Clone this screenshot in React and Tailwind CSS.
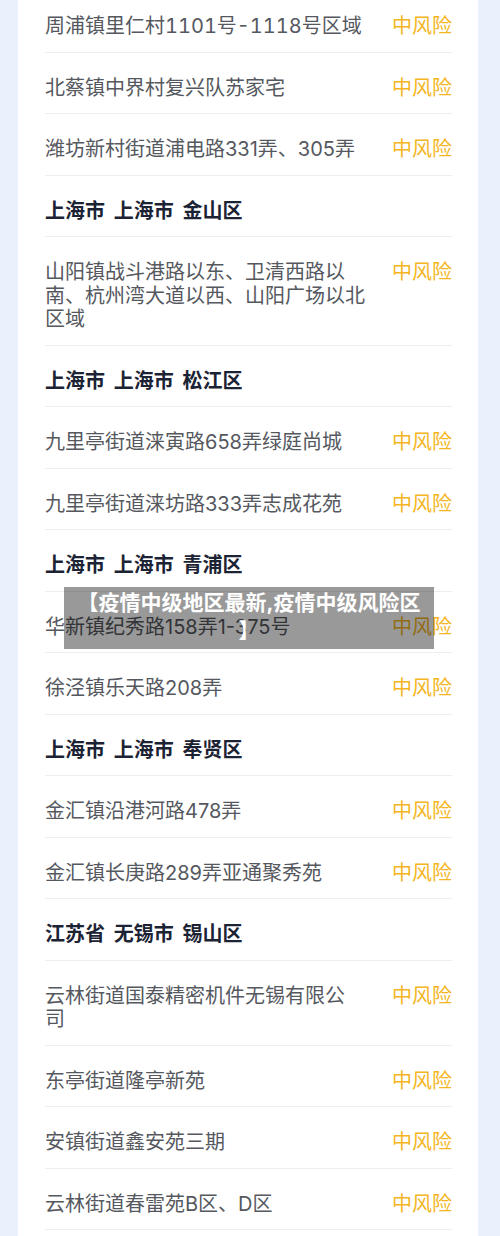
const rows = [
  { text: '周浦镇里仁村1101号-1118号区域', wide: true },
  { text: '北蔡镇中界村复兴队苏家宅' },
  { text: '潍坊新村街道浦电路331弄、305弄' },
  { header: '上海市 上海市 金山区' },
  { lines: ['山阳镇战斗港路以东、卫清西路以', '南、杭州湾大道以西、山阳广场以北', '区域'] },
  { header: '上海市 上海市 松江区' },
  { text: '九里亭街道涞寅路658弄绿庭尚城' },
  { text: '九里亭街道涞坊路333弄志成花苑' },
  { header: '上海市 上海市 青浦区' },
  { text: '华新镇纪秀路158弄1-375号' },
  { text: '徐泾镇乐天路208弄' },
  { header: '上海市 上海市 奉贤区' },
  { text: '金汇镇沿港河路478弄' },
  { text: '金汇镇长庚路289弄亚通聚秀苑' },
  { header: '江苏省 无锡市 锡山区' },
  { text: '云林街道国泰精密机件无锡有限公司' },
  { text: '东亭街道隆亭新苑' },
  { text: '安镇街道鑫安苑三期' },
  { text: '云林街道春雷苑B区、D区' },
];

function Row({ row }) {
  if (row.header) {
    return (
      <div className="pt-6 pb-[13px] border-b border-[#eceef1]">
        <h3 className="text-[20px] leading-[23.5px] font-bold text-[#1b2334] [word-spacing:4px]">{row.header}</h3>
      </div>
    );
  }
  return (
    <div className="flex items-start justify-between pt-6 pb-[13px] border-b border-[#eceef1]">
      {row.lines ? (
        <p className="w-[316px] whitespace-nowrap text-[20px] leading-[23.5px] text-[#55585e]">
          {row.lines.map((l, i) => (
            <span key={i}>
              {i > 0 && <br />}
              {l}
            </span>
          ))}
        </p>
      ) : row.wide ? (
        <p className="w-[316px] whitespace-nowrap tabular-nums text-[20px] leading-[23.5px] text-[#55585e]">{row.text}</p>
      ) : (
        <p className="w-[316px] text-[20px] leading-[23.5px] text-[#55585e]">{row.text}</p>
      )}
      <span className="text-[20px] leading-[23.5px] text-[#f4b522] shrink-0">中风险</span>
    </div>
  );
}

export default function App() {
  return (
    <div
      className="relative h-[1236px] overflow-hidden bg-[#e9f2fc] pl-[18px] pr-[22px]"
      style={{ fontFamily: 'Inter, "Noto Sans CJK SC", sans-serif' }}
    >
      <div className="-mt-[9px] bg-white pl-[27px] pr-[26px] h-[1260px]">
        {rows.map((row, i) => (
          <Row key={i} row={row} />
        ))}
      </div>

      {/* title overlay */}
      <div className="absolute left-[64px] top-[587px] w-[370px] h-[62px] bg-black/40 pt-[2px] text-center">
        <p className="whitespace-nowrap text-[21px] leading-[28px] font-bold text-white">
          【疫情中级地区最新,疫情中级风险区
          <br />】
        </p>
      </div>
    </div>
  );
}
